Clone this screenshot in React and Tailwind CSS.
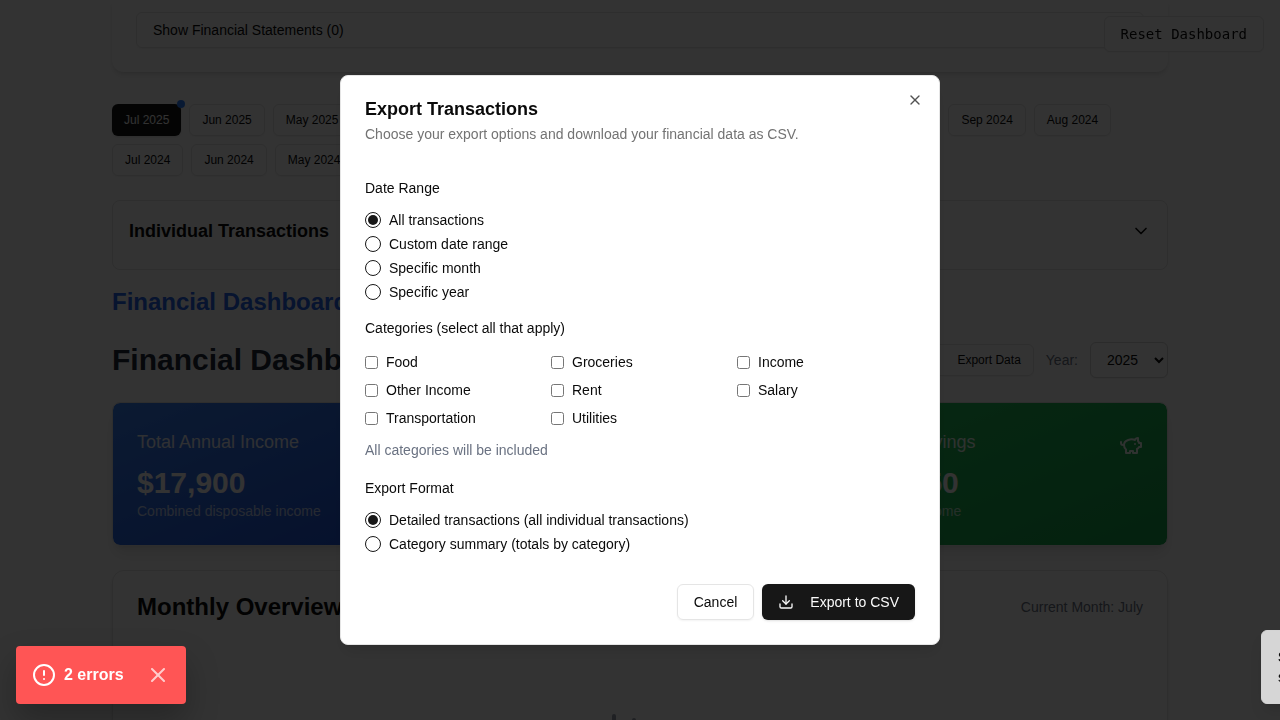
import { useState } from 'react';
import { ChevronDown, Download, X } from 'lucide-react';

const months = [
  'Jul 2025', 'Jun 2025', 'May 2025', 'Apr 2025', 'Mar 2025', 'Feb 2025',
  'Jan 2025', 'Dec 2024', 'Nov 2024', 'Oct 2024', 'Sep 2024', 'Aug 2024',
  'Jul 2024', 'Jun 2024', 'May 2024', 'Apr 2024', 'Mar 2024',
];

const ranges = ['All transactions', 'Custom date range', 'Specific month', 'Specific year'];

const categories = [
  'Food', 'Groceries', 'Income', 'Other Income', 'Rent', 'Salary', 'Transportation', 'Utilities',
];

const formats = [
  'Detailed transactions (all individual transactions)',
  'Category summary (totals by category)',
];

function PiggyIcon() {
  return (
    <svg className="size-6 opacity-90" viewBox="0 0 24 24" fill="none" stroke="currentColor" strokeWidth="2" strokeLinecap="round" strokeLinejoin="round" aria-hidden="true">
      <path d="M19 5c-1.5 0-2.8 1.4-3 2-3.5-1.5-11-.3-11 5 0 1.8 0 3 2 4.5V20h4v-2h3v2h4v-4c1-.5 1.7-1 2-2h2v-4h-2c0-1-.5-1.5-1-2V5z" />
      <path d="M2 9v1c0 1.1.9 2 2 2h1" />
      <path d="M16 11h.01" />
    </svg>
  );
}

function ChartIcon() {
  return (
    <svg className="mr-4 size-12 text-gray-400" viewBox="0 0 24 24" fill="none" stroke="currentColor" strokeWidth="2" strokeLinecap="round" strokeLinejoin="round" aria-hidden="true">
      <path d="M3 3v18h18" />
      <path d="M18 17V9" />
      <path d="M13 17V5" />
      <path d="M8 17v-3" />
    </svg>
  );
}

function StatCard({ title, value, note, icon, className }) {
  return (
    <section className={`flex flex-col gap-2 rounded-lg border border-neutral-200 bg-linear-to-br bg-clip-padding p-6 text-white shadow-lg ${className}`}>
      <div className="flex h-[30px] items-center justify-between">
        <h3 className="text-lg opacity-90">{title}</h3>
        <span className="pt-1.5">{icon}</span>
      </div>
      <div>
        <p className="text-3xl font-bold">{value}</p>
        <p className="text-sm opacity-70">{note}</p>
      </div>
    </section>
  );
}

function RadioGroup({ name, legend, options }) {
  const [selected, setSelected] = useState(options[0]);
  return (
    <fieldset>
      <legend className="mb-3 text-sm leading-6">{legend}</legend>
      <div className="flex flex-col gap-2">
        {options.map((option) => (
          <label key={option} className="flex items-center gap-2 text-sm leading-4">
            <input
              type="radio"
              name={name}
              checked={selected === option}
              onChange={() => setSelected(option)}
              className="grid size-4 appearance-none place-content-center rounded-full border border-neutral-900 checked:before:size-2.5 checked:before:rounded-full checked:before:bg-neutral-900"
            />
            {option}
          </label>
        ))}
      </div>
    </fieldset>
  );
}

function Dashboard() {
  return (
    <main className="h-screen overflow-hidden bg-white px-28 text-neutral-950">
      <section className="rounded-b-xl px-6 pt-3 pb-6 shadow-md">
        <button type="button" className="flex h-9 w-full items-center rounded-md border border-neutral-200 px-4 text-sm shadow-xs">
          Show Financial Statements (0)
        </button>
      </section>

      <nav className="mt-8 flex flex-wrap gap-2" aria-label="Months">
        {months.map((month, index) => (
          <button
            key={month}
            type="button"
            className={
              index === 0
                ? 'relative h-8 rounded-md bg-neutral-900 px-3 text-xs text-neutral-50 shadow-sm'
                : 'h-8 rounded-md border border-neutral-200 px-3 text-xs shadow-xs'
            }
          >
            {month}
            {index === 0 && <span className="absolute -top-1 -right-1 size-2 rounded-full bg-blue-500" />}
          </button>
        ))}
      </nav>

      <section className="mt-6 rounded-lg border border-neutral-200 px-4 pt-4 pb-6">
        <button type="button" className="flex w-full items-center justify-between">
          <span className="text-lg font-semibold">Individual Transactions</span>
          <ChevronDown className="size-5" />
        </button>
      </section>

      <h1 className="mt-4 text-2xl font-bold text-[#2563eb]">Financial Dashboard</h1>

      <div className="mt-6 flex items-center justify-between">
        <h2 className="text-3xl font-bold text-gray-800">Financial Dashboard</h2>
        <div className="flex items-center gap-3">
          <button type="button" className="flex h-8 items-center gap-4 rounded-md border border-neutral-200 px-3 text-xs shadow-xs">
            <Download className="size-4" />
            Export Data
          </button>
          <label htmlFor="year" className="text-sm text-gray-500">Year:</label>
          <select id="year" className="h-9 w-[78px] rounded-md border border-neutral-300 bg-white px-3 text-sm shadow-xs">
            <option>2025</option>
            <option>2024</option>
          </select>
        </div>
      </div>

      <div className="mt-6 grid grid-cols-3 gap-6">
        <StatCard title="Total Annual Income" value="$17,900" note="Combined disposable income" className="from-[#3b82f6] to-[#1d4ed8]" />
        <StatCard title="Expenses" value="$13,550" note="Total spending" className="from-[#ef4444] to-[#dc2626]" />
        <StatCard title="Yearly Savings" value="$-4,350" note="24.3% of income" icon={<PiggyIcon />} className="from-[#22c55e] to-[#16a34a]" />
      </div>

      <section className="mt-6 rounded-xl border border-neutral-200 p-6 shadow-md">
        <div className="flex items-center justify-between">
          <h3 className="text-2xl leading-6 font-semibold">Monthly Overview</h3>
          <p className="text-sm text-gray-500">Current Month: July</p>
        </div>
        <div className="flex h-[230px] items-center justify-center">
          <ChartIcon />
        </div>
      </section>

      <button type="button" className="fixed top-4 right-4 h-9 rounded-md border border-neutral-200 bg-white px-4 font-['DejaVu_Sans_Mono',monospace] text-sm shadow-xs">
        Reset Dashboard
      </button>
    </main>
  );
}

function ExportDialog() {
  return (
    <div className="fixed inset-0 flex items-center justify-center bg-black/80">
      <div
        role="dialog"
        aria-modal="true"
        aria-labelledby="export-title"
        className="relative flex w-full max-w-[600px] flex-col gap-4 rounded-lg border border-neutral-200 bg-white p-6 text-neutral-950 shadow-lg"
      >
        <header className="flex flex-col gap-1.5">
          <h2 id="export-title" className="text-lg leading-[18px] font-semibold">Export Transactions</h2>
          <p className="text-sm text-neutral-500">Choose your export options and download your financial data as CSV.</p>
        </header>

        <form className="flex flex-col gap-4 py-4">
          <RadioGroup name="range" legend="Date Range" options={ranges} />
          <fieldset>
            <legend className="mb-3 text-sm leading-6">Categories (select all that apply)</legend>
            <div className="grid grid-cols-3 gap-2">
              {categories.map((category) => (
                <label key={category} className="flex items-center gap-2 text-sm">
                  <input type="checkbox" />
                  {category}
                </label>
              ))}
            </div>
            <p className="mt-3 text-sm text-gray-500">All categories will be included</p>
          </fieldset>
          <RadioGroup name="format" legend="Export Format" options={formats} />
        </form>

        <footer className="flex justify-end gap-2">
          <button type="button" className="h-9 rounded-md border border-neutral-200 px-4 text-sm shadow-xs">Cancel</button>
          <button type="button" className="flex h-9 items-center gap-4 rounded-md bg-neutral-900 px-4 text-sm text-neutral-50 shadow-sm">
            <Download className="size-4" />
            Export to CSV
          </button>
        </footer>

        <button type="button" aria-label="Close" className="absolute top-4 right-4 opacity-70">
          <X className="size-4" />
        </button>
      </div>
    </div>
  );
}

function ErrorToast() {
  return (
    <div className="fixed bottom-4 left-4 flex items-center rounded-sm bg-[#ff5555] p-4 font-bold text-white shadow-[0_16px_32px_rgba(0,0,0,0.25)]">
      <svg className="mr-2 size-6" viewBox="0 0 24 24" fill="none" stroke="currentColor" strokeWidth="2" strokeLinecap="round" aria-hidden="true">
        <circle cx="12" cy="12" r="10" />
        <path d="M12 8v4M12 16h.01" />
      </svg>
      <span className="leading-[26px]">2 errors</span>
      <button type="button" aria-label="Hide errors" className="ml-[22px] opacity-70">
        <X className="size-6" strokeWidth={2} />
      </button>
    </div>
  );
}

function StatusToast() {
  return (
    <div role="status" className="fixed -right-[369px] bottom-4 w-[388px] rounded-md border border-neutral-300 bg-[#d6d6d6] p-4 text-sm text-neutral-950 shadow-lg">
      <p className="font-semibold">Success</p>
      <p>statements loaded</p>
    </div>
  );
}

export default function App() {
  return (
    <div className="font-['Liberation_Sans',Arial,sans-serif]">
      <Dashboard />
      <ExportDialog />
      <ErrorToast />
      <StatusToast />
    </div>
  );
}
